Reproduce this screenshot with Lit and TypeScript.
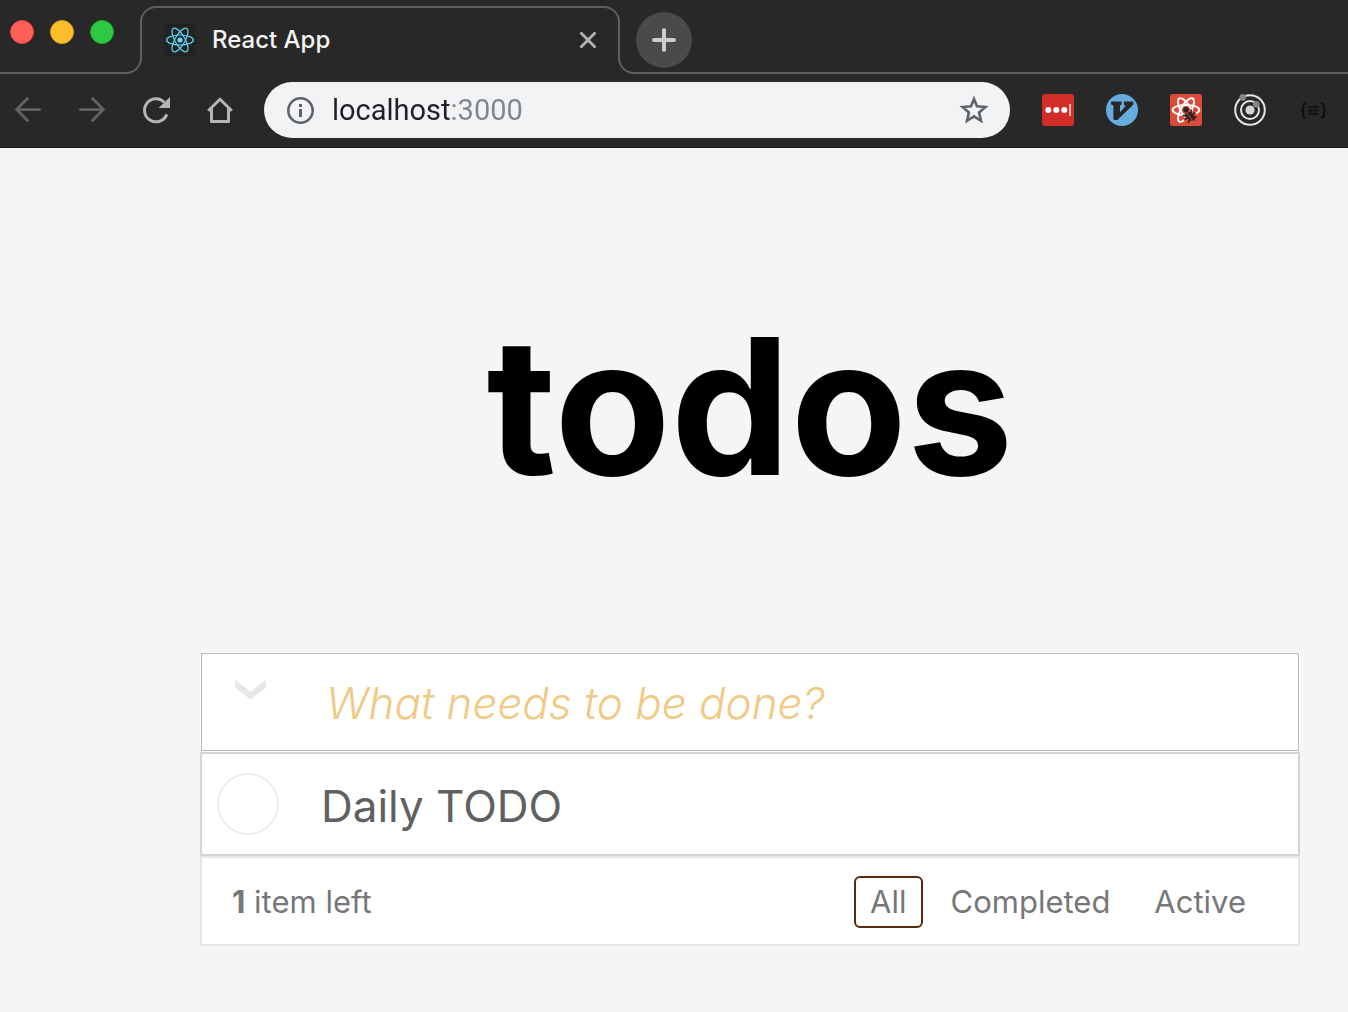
import { LitElement, html, css, svg } from "lit";
import { customElement, property, state } from "lit/decorators.js";
import { classMap } from "lit/directives/class-map.js";

interface Todo {
  id: number;
  text: string;
  done: boolean;
}

type Filter = "All" | "Completed" | "Active";

const atom = svg`
  <ellipse cx="16" cy="16" rx="13.4" ry="5"></ellipse>
  <ellipse cx="16" cy="16" rx="13.4" ry="5" transform="rotate(60 16 16)"></ellipse>
  <ellipse cx="16" cy="16" rx="13.4" ry="5" transform="rotate(120 16 16)"></ellipse>`;

@customElement("browser-chrome")
export class BrowserChrome extends LitElement {
  @property() tabTitle = "";
  @property() address = "";

  static styles = css`
    :host {
      display: block;
      background: #282828;
      border-bottom: 1px solid #191919;
    }
    button {
      display: block;
      padding: 0;
      border: 0;
      background: none;
      flex: none;
    }
    svg {
      display: block;
      width: 32px;
      height: 32px;
    }
    .strip {
      display: flex;
      height: 74px;
    }
    .side {
      display: grid;
    }
    .side > * {
      grid-area: 1 / 1;
    }
    .right {
      flex: 1;
      margin-left: -2px;
    }
    .edge {
      align-self: end;
      height: 52px;
      box-sizing: border-box;
      border: 0 solid #5f5f5f;
      border-bottom-width: 2px;
    }
    .left .edge {
      border-right-width: 2px;
      border-bottom-right-radius: 16px;
    }
    .right .edge {
      border-left-width: 2px;
      border-bottom-left-radius: 16px;
    }
    .lights {
      display: flex;
      gap: 16px;
      padding: 20px 28px 0 10px;
    }
    .light {
      width: 24px;
      height: 24px;
      box-sizing: border-box;
      border-radius: 50%;
      border: 1px solid;
    }
    .close {
      background: #ff5f57;
      border-color: #e2463f;
    }
    .minimise {
      background: #ffbd2e;
      border-color: #e1a116;
    }
    .zoom {
      background: #2acb42;
      border-color: #18ac2c;
    }
    .tab {
      display: flex;
      align-items: center;
      gap: 16px;
      flex: 0 1 480px;
      box-sizing: border-box;
      height: 52px;
      margin: 6px 0 0 -2px;
      padding: 14px 14px 0 22px;
      border: solid #5f5f5f;
      border-width: 2px 2px 0;
      border-radius: 16px 16px 0 0;
    }
    .tab svg {
      flex: none;
    }
    .name {
      flex: 1;
      font: 500 24px/32px Inter, "Liberation Sans", sans-serif;
      color: #f4f4f4;
    }
    .add {
      align-self: start;
      width: 56px;
      height: 56px;
      margin: 12px 0 0 18px;
      border-radius: 50%;
      background: #4a4a4a;
    }
    .add svg {
      margin: auto;
    }
    .bar {
      display: flex;
      align-items: center;
      gap: 32px;
      padding: 8px 18px 9px 12px;
    }
    .field {
      display: flex;
      align-items: center;
      gap: 16px;
      flex: 1;
      min-width: 0;
      box-sizing: border-box;
      height: 56px;
      margin-left: -4px;
      padding: 0 20px;
      border-radius: 28px;
      background: #f1f3f4;
    }
    .url {
      flex: 1;
      min-width: 0;
      height: 40px;
      padding: 0;
      border: 0;
      outline: 0;
      font: 400 29px/40px Roboto, "Liberation Sans", sans-serif;
      color: #202124;
      background: linear-gradient(90deg, #202124 119px, #80868b 119px);
      background-clip: text;
      -webkit-background-clip: text;
      -webkit-text-fill-color: transparent;
    }
  `;

  render() {
    return html`
      <div class="strip">
        <div class="side left">
          <div class="edge"></div>
          <div class="lights">
            <button class="light close" aria-label="Close window"></button>
            <button class="light minimise" aria-label="Minimise window"></button>
            <button class="light zoom" aria-label="Zoom window"></button>
          </div>
        </div>
        <div class="tab">
          <svg viewBox="0 0 32 32" fill="none" stroke="#61dafb" stroke-width="1.2">
            <rect width="32" height="32" rx="4" fill="#222" stroke="none"></rect>
            ${atom}
            <circle cx="16" cy="16" r="2.6" fill="#61dafb" stroke="none"></circle>
          </svg>
          <span class="name">${this.tabTitle}</span>
          <button aria-label="Close tab">
            <svg viewBox="0 0 32 32" fill="none" stroke="#b4b4b4" stroke-width="2.8" stroke-linecap="round">
              <path d="M9.3 9.3 22.7 22.7M22.7 9.3 9.3 22.7"></path>
            </svg>
          </button>
        </div>
        <div class="side right">
          <div class="edge"></div>
          <button class="add" aria-label="New tab">
            <svg viewBox="0 0 32 32" fill="none" stroke="#cbcbcb" stroke-width="4" stroke-linecap="round">
              <path d="M16 6V26M6 16H26"></path>
            </svg>
          </button>
        </div>
      </div>
      <div class="bar">
        <button aria-label="Back">
          <svg viewBox="0 0 32 32" fill="none" stroke="#636363" stroke-width="2.8" stroke-linecap="round">
            <path d="M15.5 4.6 4.6 15.6 15.5 26.6M4.6 15.6H27.6"></path>
          </svg>
        </button>
        <button aria-label="Forward">
          <svg viewBox="0 0 32 32" fill="none" stroke="#636363" stroke-width="2.8" stroke-linecap="round">
            <path d="M16.5 4.6 27.4 15.6 16.5 26.6M27.4 15.6H4.4"></path>
          </svg>
        </button>
        <button aria-label="Reload">
          <svg viewBox="0 0 32 32">
            <path d="M24.2 8.2A11.5 11.5 0 1 0 26.8 20.4" fill="none" stroke="#b5b5b5" stroke-width="3"></path>
            <path d="M30 3V14H18.6Z" fill="#b5b5b5"></path>
          </svg>
        </button>
        <button aria-label="Home">
          <svg viewBox="0 0 32 32" fill="none" stroke="#b5b5b5" stroke-width="3">
            <path d="M4.2 16.7 16 5.2 27.8 16.7M7.5 14.5V27.5H24.5V14.5" stroke-linejoin="round"></path>
          </svg>
        </button>
        <div class="field">
          <button aria-label="Site information">
            <svg viewBox="0 0 32 32">
              <circle cx="16.5" cy="16.5" r="12.2" fill="none" stroke="#5f6368" stroke-width="2.6"></circle>
              <path d="M15 10H18V13H15ZM15 15H18V23H15Z" fill="#5f6368"></path>
            </svg>
          </button>
          <input class="url" type="text" aria-label="Address" .value=${this.address} />
          <button aria-label="Bookmark this page">
            <svg viewBox="0 0 32 32" fill="none" stroke="#5f6368" stroke-width="2.6">
              <path d="M16 5 19 12.2 27.4 13 21.1 18.4 23 26.8 16 22.4 9 26.8 10.9 18.4 4.6 13 13 12.2Z"></path>
            </svg>
          </button>
        </div>
        <button aria-label="Password manager">
          <svg viewBox="0 0 32 32">
            <rect width="32" height="32" rx="3" fill="#d32d27"></rect>
            <g fill="#fff">
              <circle cx="6.3" cy="16" r="3"></circle>
              <circle cx="14.3" cy="16" r="3"></circle>
              <circle cx="22.3" cy="16" r="3"></circle>
              <rect x="27.4" y="10" width="1.3" height="12"></rect>
            </g>
          </svg>
        </button>
        <button aria-label="Keyboard navigation">
          <svg viewBox="0 0 32 32">
            <circle cx="16" cy="16" r="16" fill="#65ade0"></circle>
            <path d="M5 7.5H15.6V10.5L14 11.6V18.2L19.6 12 18 10.6V7.5H27.4V10.4L11.4 26H8.2L7.4 25V11.4L5 10.4Z" fill="#282828"></path>
          </svg>
        </button>
        <button aria-label="Component inspector">
          <svg viewBox="0 0 32 32">
            <rect width="32" height="32" rx="2.5" fill="#dc4a38"></rect>
            <g fill="none" stroke="#fff" stroke-width="1.9">${atom}</g>
            <path d="M16 21 13.5 26 17 29.5 27 28.5 26 18.5 22 17Z" fill="#dc4a38"></path>
            <g stroke="#2a2523" stroke-width="1.6" fill="none">
              <path d="M12.6 21.6H17M14.6 25.6 18 23.6M18.2 29 19.4 25.5M21.2 15.4 21 19M25 18.6 22.4 20.6M26.6 23 23 22.6"></path>
            </g>
            <circle cx="16" cy="15.8" r="2.8" fill="#2a2523"></circle>
            <path d="M14.6 20.6 20 17.4 25.6 23.4 24.6 26.4 20 26.8Z" fill="#2a2523"></path>
            <path d="M17.4 19.4 22.6 26.6" stroke="#dc4a38" stroke-width="1"></path>
          </svg>
        </button>
        <button aria-label="State inspector">
          <svg viewBox="0 0 32 32" fill="none" stroke="#e4e4e4" stroke-width="2">
            <circle cx="16" cy="16" r="14.8"></circle>
            <circle cx="16" cy="16" r="9"></circle>
            <circle cx="16" cy="16" r="4.6" fill="#d4d4d4" stroke="none"></circle>
            <circle cx="8.7" cy="3.4" r="3.3" fill="#858585" stroke="none"></circle>
            <circle cx="22.3" cy="10.3" r="3.3" fill="#858585" stroke="none"></circle>
          </svg>
        </button>
        <button aria-label="Data viewer">
          <svg viewBox="0 0 32 32" fill="none" stroke="#101010" stroke-width="2">
            <path d="M7.9 9.5H7.1Q5.2 9.5 5.2 11.5V14Q5.2 16.5 3 16.5 5.2 16.5 5.2 19V21.5Q5.2 23.5 7.1 23.5H7.9M23.1 9.5H23.9Q25.8 9.5 25.8 11.5V14Q25.8 16.5 28 16.5 25.8 16.5 25.8 19V21.5Q25.8 23.5 23.9 23.5H23.1"></path>
            <path d="M10 13H21M10 16.5H21M10 20H21" stroke-width="1.5"></path>
            <path d="M17.5 11.6V14.4M13.5 15.1V17.9M17.5 18.6V21.4" stroke-width="1.5"></path>
          </svg>
        </button>
      </div>
    `;
  }
}

@customElement("todo-app")
export class TodoApp extends LitElement {
  @state() private todos: Todo[] = [{ id: 1, text: "Daily TODO", done: false }];
  @state() private filter: Filter = "All";

  static styles = css`
    :host {
      display: block;
      padding: 158px 48px 64px 200px;
      font-family: Inter, "Liberation Sans", sans-serif;
      font-weight: 400;
    }
    h1 {
      margin: 0 0 146px;
      font-size: 190px;
      line-height: 200px;
      font-weight: 700;
      text-align: center;
      color: #000;
    }
    .list-box {
      background: #fff;
    }
    .frame {
      padding: 1px;
    }
    .entry {
      display: flex;
      align-items: stretch;
      height: 98px;
      box-sizing: border-box;
      border: 1px solid #b8b8b8;
    }
    .all {
      align-self: flex-start;
      display: block;
      padding: 22px 32px;
      border: 0;
      background: none;
    }
    .all svg {
      display: block;
      width: 32px;
      height: 28px;
    }
    .new {
      flex: 1;
      min-width: 0;
      padding: 2px 16px 0 28px;
      border: 0;
      outline: 0;
      background: none;
      font: inherit;
      font-size: 44px;
      color: #4d4d4d;
    }
    .new::placeholder {
      color: #f0c984;
      font-style: italic;
      font-weight: 300;
      opacity: 1;
    }
    ul {
      margin: 0;
      padding: 0;
      list-style: none;
    }
    .item {
      display: flex;
      align-items: center;
      gap: 42px;
      height: 104px;
      box-sizing: border-box;
      padding: 0 15px;
      border: 2px solid #d6d6d6;
    }
    .tick {
      appearance: none;
      flex: none;
      width: 62px;
      height: 62px;
      margin: 0;
      border: 2px solid #ededed;
      border-radius: 50%;
    }
    .tick:checked {
      border-color: #bddad5;
    }
    .item label {
      padding-top: 4px;
      font-size: 44px;
      line-height: 56px;
      color: #606060;
    }
    .done label {
      text-decoration: line-through;
      color: #d9d9d9;
    }
    .footer {
      display: flex;
      align-items: center;
      justify-content: space-between;
      height: 90px;
      box-sizing: border-box;
      padding: 2px 36px 0 30px;
      border: 2px solid #e6e6e6;
      font-size: 31px;
      line-height: 40px;
      color: #777;
    }
    strong {
      font-weight: 700;
    }
    .filters {
      display: flex;
      gap: 12px;
    }
    .filters a {
      padding: 4px 14px;
      border: 2px solid transparent;
      border-radius: 6px;
      color: inherit;
      text-decoration: none;
    }
    .filters .on {
      border-color: #5b2a0c;
    }
  `;

  private add(e: KeyboardEvent) {
    const box = e.target as HTMLInputElement;
    const text = box.value.trim();
    if (e.key !== "Enter" || !text) return;
    this.todos = [...this.todos, { id: Date.now(), text, done: false }];
    box.value = "";
  }

  private toggle(id: number) {
    this.todos = this.todos.map((t) => (t.id === id ? { ...t, done: !t.done } : t));
  }

  private toggleAll() {
    const done = this.todos.some((t) => !t.done);
    this.todos = this.todos.map((t) => ({ ...t, done }));
  }

  private pick(e: Event, f: Filter) {
    e.preventDefault();
    this.filter = f;
  }

  render() {
    const left = this.todos.filter((t) => !t.done).length;
    const shown = this.todos.filter(
      (t) => this.filter === "All" || t.done === (this.filter === "Completed")
    );
    const filters: Filter[] = ["All", "Completed", "Active"];
    return html`
      <h1>todos</h1>
      <section class="list-box">
        <div class="frame">
          <div class="entry">
            <button class="all" aria-label="Toggle all" @click=${this.toggleAll}>
              <svg viewBox="0 0 32 28">
                <path d="M1 4 16.5 15.5 32 4V11.5L16.5 23.5 1 11.5Z" fill="#e6e6e6"></path>
              </svg>
            </button>
            <input class="new" type="text" aria-label="New todo" placeholder="What needs to be done?" @keydown=${this.add} />
          </div>
        </div>
        <ul>
          ${shown.map(
            (t) => html`<li class=${classMap({ item: true, done: t.done })}>
              <input class="tick" type="checkbox" id="todo-${t.id}" .checked=${t.done} @change=${() => this.toggle(t.id)} />
              <label for="todo-${t.id}">${t.text}</label>
            </li>`
          )}
        </ul>
        <footer class="footer">
          <span><strong>${left}</strong> ${left === 1 ? "item" : "items"} left</span>
          <nav class="filters">
            ${filters.map(
              (f) => html`<a href="#${f.toLowerCase()}" class=${classMap({ on: f === this.filter })} @click=${(e: Event) => this.pick(e, f)}>${f}</a>`
            )}
          </nav>
        </footer>
      </section>
    `;
  }
}

@customElement("app-root")
export class AppRoot extends LitElement {
  static styles = css`
    :host {
      display: block;
      min-height: 100vh;
      background: #f5f5f5;
    }
  `;

  render() {
    return html`
      <browser-chrome tabTitle="React App" address="localhost:3000"></browser-chrome>
      <todo-app></todo-app>
    `;
  }
}
